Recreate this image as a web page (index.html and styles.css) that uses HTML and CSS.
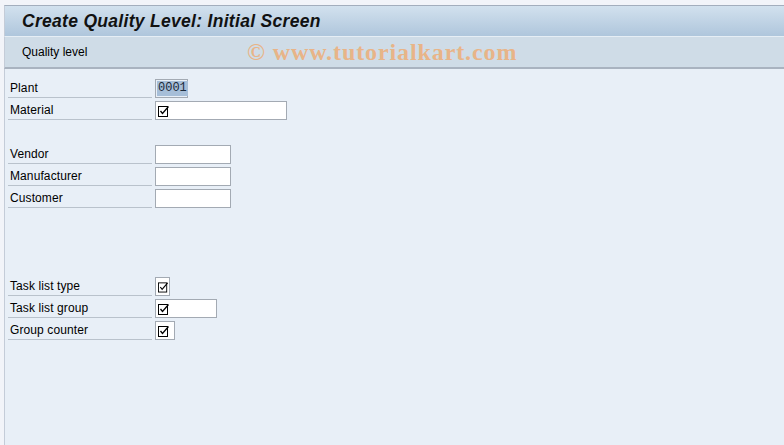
FILE: index.html
```html
<!DOCTYPE html>
<html lang="en">
<head>
  <meta charset="UTF-8" />
  <title>Create Quality Level: Initial Screen</title>
  <link rel="stylesheet" href="styles.css">
</head>
<body>
  <div class="window">
    <div class="title-bar">
      <h1 class="title">Create Quality Level: Initial Screen</h1>
    </div>
    <div class="toolbar">
      <span class="tool-item">Quality level</span>
      <span class="watermark">&copy; www.tutorialkart.com</span>
    </div>
    <div class="content">
      <div class="row">
        <span class="label">Plant</span>
        <span class="field field-plant"><span class="selected">0001</span></span>
      </div>
      <div class="row">
        <span class="label">Material</span>
        <span class="field field-material"><svg class="req" viewBox="0 0 12 12"><rect x="0.5" y="1.5" width="9" height="10" fill="none" stroke="#000"/><path d="M2.5 6 L4.5 8.5 L10.5 1.5" fill="none" stroke="#000" stroke-width="1.3"/></svg></span>
      </div>
      <div class="spacer"></div>
      <div class="row">
        <span class="label">Vendor</span>
        <span class="field field-short"></span>
      </div>
      <div class="row">
        <span class="label">Manufacturer</span>
        <span class="field field-short"></span>
      </div>
      <div class="row">
        <span class="label">Customer</span>
        <span class="field field-short"></span>
      </div>
      <div class="spacer"></div>
      <div class="spacer"></div>
      <div class="spacer"></div>
      <div class="row">
        <span class="label">Task list type</span>
        <span class="field field-type"><svg class="req" viewBox="0 0 12 12"><rect x="0.5" y="1.5" width="9" height="10" fill="none" stroke="#000"/><path d="M2.5 6 L4.5 8.5 L10.5 1.5" fill="none" stroke="#000" stroke-width="1.3"/></svg></span>
      </div>
      <div class="row">
        <span class="label">Task list group</span>
        <span class="field field-group"><svg class="req" viewBox="0 0 12 12"><rect x="0.5" y="1.5" width="9" height="10" fill="none" stroke="#000"/><path d="M2.5 6 L4.5 8.5 L10.5 1.5" fill="none" stroke="#000" stroke-width="1.3"/></svg></span>
      </div>
      <div class="row">
        <span class="label">Group counter</span>
        <span class="field field-counter"><svg class="req" viewBox="0 0 12 12"><rect x="0.5" y="1.5" width="9" height="10" fill="none" stroke="#000"/><path d="M2.5 6 L4.5 8.5 L10.5 1.5" fill="none" stroke="#000" stroke-width="1.3"/></svg></span>
      </div>
    </div>
  </div>
</body>
</html>
```

FILE: styles.css
```css
html, body {
  height: 100%;
}
body {
  margin: 0;
  background: #f2f4f9;
  font-family: "Liberation Sans", Arial, sans-serif;
  font-size: 12px;
  color: #000;
}
.window {
  margin-left: 4px;
  padding-top: 5px;
  height: calc(100% - 5px);
  display: flex;
  flex-direction: column;
}
.title-bar {
  height: 30px;
  border-top: 1px solid #a3aebd;
  border-left: 1px solid #c4ccd8;
  background: linear-gradient(to bottom, #d2e1ee, #afc6dc);
  display: flex;
  align-items: center;
  padding-left: 17px;
}
.title {
  margin: 0;
  font-size: 17.5px;
  font-weight: bold;
  font-style: italic;
  color: #111;
  letter-spacing: 0.3px;
}
.toolbar {
  height: 30px;
  border-top: 1px solid #e6eef5;
  border-left: 1px solid #c4ccd8;
  border-bottom: 2px solid #a9b3c0;
  background: #cfdce7;
  display: flex;
  align-items: center;
  padding-left: 17px;
}
.tool-item {
  width: 225px;
}
.watermark {
  font-family: "Liberation Serif", "Times New Roman", serif;
  font-weight: bold;
  font-size: 24px;
  color: #e8b488;
  letter-spacing: 0.9px;
}
.content {
  flex: 1;
  background: #e8eff7;
  border-left: 1px solid #c4ccd8;
  padding-top: 8px;
}
.row {
  height: 22px;
  display: flex;
  align-items: flex-start;
  padding-left: 3px;
}
.spacer {
  height: 22px;
}
.label {
  width: 142px;
  height: 20px;
  line-height: 22px;
  padding-left: 2px;
  border-bottom: 1px solid #b9c2cc;
  margin-right: 3px;
  letter-spacing: 0.1px;
}
.field {
  height: 17px;
  margin-top: 2px;
  background: #fff;
  border: 1px solid #a3aab3;
  display: flex;
  align-items: center;
  padding-left: 2px;
  box-sizing: content-box;
}
.req {
  width: 12px;
  height: 12px;
}
.field-plant {
  width: 30px;
  background: #e8eff7;
  padding-left: 1px;
}
.selected {
  background: #a6bed8;
  font-family: "Liberation Mono", "DejaVu Sans Mono", monospace;
  font-size: 12px;
  line-height: 15px;
  padding: 0 1px;
  color: #1c2a3a;
}
.field-material {
  width: 128px;
}
.field-short {
  width: 72px;
}
.field-type {
  width: 11px;
}
.field-group {
  width: 58px;
}
.field-counter {
  width: 16px;
}
```
